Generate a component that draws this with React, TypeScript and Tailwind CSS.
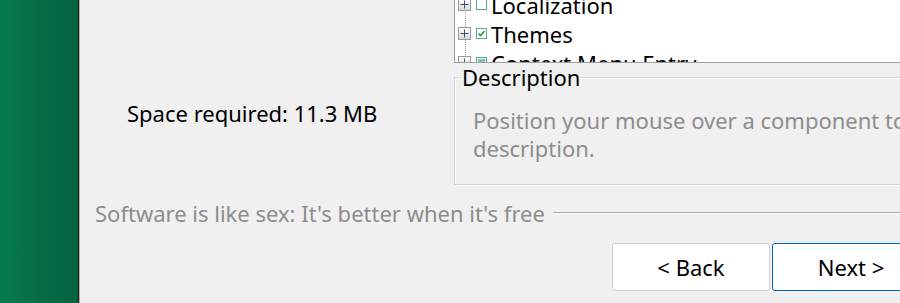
import React from "react";

const font = { fontFamily: '"Noto Sans", "Open Sans", sans-serif' };

function Expander() {
  return (
    <div className="w-[13px] h-[13px] border border-[#9a9a9a] bg-gradient-to-b from-white to-[#d8d8d8] flex items-center justify-center shrink-0">
      <svg width="9" height="9" viewBox="0 0 9 9">
        <path d="M0.5 4.5H8.5M4.5 0.5V8.5" stroke="#3c4f86" strokeWidth="1" />
      </svg>
    </div>
  );
}

function Check({ state }: { state: "off" | "on" | "partial" }) {
  return (
    <div className="w-[11px] h-[11px] border border-[#5aa99c] bg-white flex items-center justify-center shrink-0">
      {state === "on" && (
        <svg width="9" height="9" viewBox="0 0 9 9">
          <path d="M1.5 4.5L3.5 6.5L7.5 2" stroke="#1f9a3a" strokeWidth="1.6" fill="none" />
        </svg>
      )}
      {state === "partial" && <div className="w-[7px] h-[7px] bg-[#7cc4b8]" />}
    </div>
  );
}

function TreeRow({ label, state }: { label: string; state: "off" | "on" | "partial" }) {
  return (
    <div className="h-[29px] flex items-center text-[22px] text-black leading-none whitespace-nowrap">
      <Expander />
      <div className="w-[5px]" />
      <Check state={state} />
      <span className="ml-[4px]">{label}</span>
    </div>
  );
}

export default function App() {
  return (
    <div className="w-[900px] h-[303px] flex bg-[#f0f0f0] overflow-hidden" style={font}>
      <div className="w-[78px] shrink-0 h-full bg-gradient-to-r from-[#067a4c] to-[#04613f]" />
      <div className="w-[1px] shrink-0 h-full bg-[#1c1c1c]" />
      <div className="w-[1px] shrink-0 h-full bg-[#b0b0b0]" />
      <div className="flex-1 flex flex-col min-w-0">
        <div className="flex h-[197px]">
          <div className="w-[374px] shrink-0 pl-[47px] pt-[98px] text-[22px] text-black leading-[30px] whitespace-nowrap">
            Space required: 11.3 MB
          </div>
          <div className="flex-1 flex flex-col min-w-0">
            <div className="mt-[-8px] h-[71px] bg-white border-l border-b border-[#a0a0a0] overflow-hidden pl-[3px] relative">
              <div className="absolute left-[10px] top-[0px] h-[71px] border-l border-dotted border-[#a0a0a0]" />
              <div className="relative -mt-[2px]">
                <TreeRow label="Localization" state="off" />
                <TreeRow label="Themes" state="on" />
                <TreeRow label="Context Menu Entry" state="partial" />
              </div>
            </div>
            <div className="relative mt-[14px] h-[108px] border border-[#d6d6d6] shadow-[inset_1px_1px_0_white,1px_1px_0_white] mr-[-4px]">
              <div className="absolute left-[6px] top-[-14px] bg-[#f0f0f0] px-[1px] text-[22px] leading-[26px] text-black whitespace-nowrap">
                Description
              </div>
              <div className="pl-[18px] pt-[28px] text-[22px] leading-[28px] text-[#8d8d8d] whitespace-nowrap">
                Position your mouse over a component to see its
                <br />
                description.
              </div>
            </div>
          </div>
        </div>
        <div className="flex items-center h-[32px] pl-[15px]">
          <span className="text-[22px] text-[#8d8d8d] whitespace-nowrap leading-none">
            Software is like sex: It's better when it's free
          </span>
          <div className="flex-1 ml-[8px] h-[2px] border-t border-[#a6a6a6] border-b border-b-white" />
        </div>
        <div className="flex pl-[532px] pt-[14px] gap-[2px]">
          <button className="w-[158px] h-[48px] bg-white border border-[#d0d0d0] rounded-[3px] text-[22px] text-black shrink-0">
            &lt; Back
          </button>
          <button className="w-[158px] h-[48px] bg-white border border-[#0067c0] rounded-[3px] text-[22px] text-black shrink-0">
            Next &gt;
          </button>
        </div>
      </div>
    </div>
  );
}
